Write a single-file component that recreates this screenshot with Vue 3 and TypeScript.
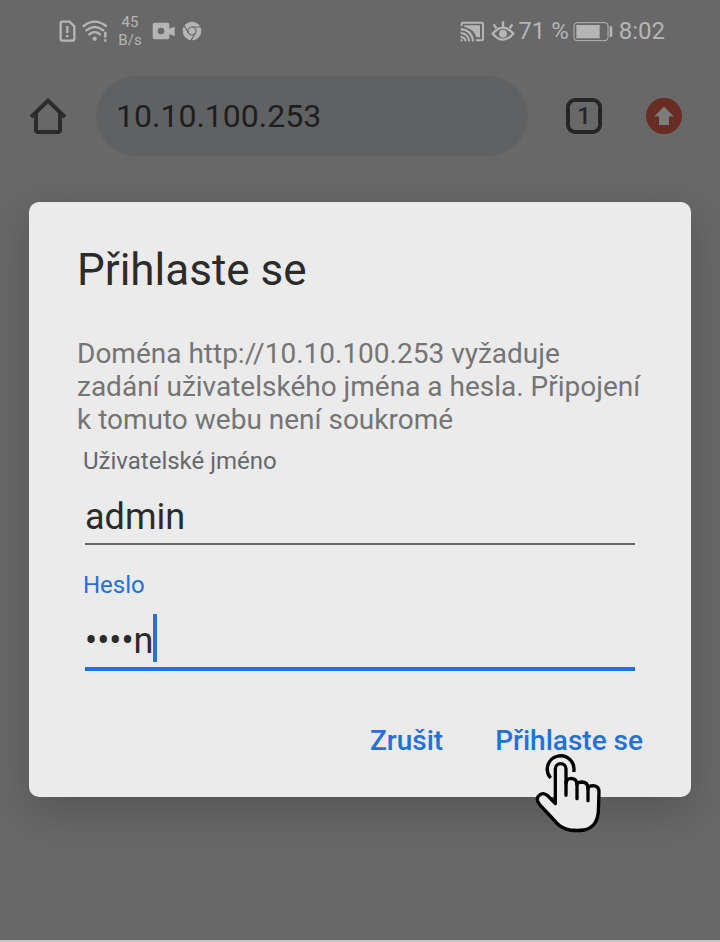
<script setup lang="ts">
import { ref } from 'vue'

const url = ref('10.10.100.253')
const username = ref('admin')
const password = ref('••••n')
</script>

<template>
  <div class="screen">
    <header class="status">
      <div class="status-left">
        <svg class="sim" viewBox="28 40 51 66" aria-hidden="true">
          <path d="M36 45H60L74 59V97Q74 102 69 102H38Q33 102 33 97V49Q33 45 36 45Z" fill="none" stroke="currentColor" stroke-width="7" stroke-linejoin="round" />
          <path d="M53 58V79M53 85V92" stroke="currentColor" stroke-width="7" />
        </svg>
        <svg class="wifi" viewBox="96 40 78 66" aria-hidden="true">
          <g fill="none" stroke="currentColor" stroke-width="7" stroke-linecap="round">
            <path d="M101 58Q134 32 168 58" />
            <path d="M109 71Q134 51 160 71" />
            <path d="M118 83Q134 70 150 83" />
          </g>
          <circle cx="134" cy="96" r="6.5" fill="currentColor" />
          <path d="M166 75V93M166 98V105" stroke="currentColor" stroke-width="7" />
        </svg>
        <div class="speed"><span>45</span><span>B/s</span></div>
        <svg class="camera" viewBox="306 48 72 60" aria-hidden="true">
          <path fill="currentColor" fill-rule="evenodd" d="M314 53H352Q358 53 358 59V71L374 65V94L358 87V97Q358 103 352 103H314Q308 103 308 97V59Q308 53 314 53ZM333 68A10 10 0 1 0 333 88A10 10 0 1 0 333 68Z" />
        </svg>
        <svg class="chrome" viewBox="396 48 60 60" aria-hidden="true">
          <circle cx="426" cy="78" r="28" fill="currentColor" />
          <g fill="none" stroke="#686868" stroke-width="3.5">
            <circle cx="426" cy="78" r="12" />
            <path d="M426 66H452M415.6 84L402 62M436.4 84L423 106" />
          </g>
        </svg>
      </div>
      <div class="status-right">
        <svg class="cast" viewBox="30 29 75 63" aria-hidden="true">
          <path d="M35 44V37Q35 34 38 34H96Q99 34 99 37V84Q99 87 96 87H78" fill="none" stroke="currentColor" stroke-width="6" />
          <path d="M43 42H90V78H79Q72 53 43 47Z" fill="currentColor" />
          <g fill="none" stroke="currentColor" stroke-width="6">
            <path d="M32 54Q66 56 69 90" />
            <path d="M32 65Q55 67 58 90" />
            <path d="M32 76Q45 78 47 90" />
          </g>
          <path d="M32 82Q38 83 39 90H32Z" fill="currentColor" />
        </svg>
        <svg class="eye" viewBox="123 29 72 63" aria-hidden="true">
          <path d="M128 67Q159 31 190 67Q159 103 128 67Z" fill="none" stroke="currentColor" stroke-width="7" />
          <circle cx="159" cy="67" r="12" fill="currentColor" />
          <path d="M159 30V48M131 39L139 51M187 39L179 51" stroke="currentColor" stroke-width="7" />
        </svg>
        <span class="percent">71 %</span>
        <svg class="battery" viewBox="368 30 120 63" aria-hidden="true">
          <rect x="371" y="35" width="102" height="54" rx="9" fill="none" stroke="currentColor" stroke-width="3" />
          <rect x="378" y="42" width="70" height="40" fill="currentColor" />
          <path d="M478 46H482Q486 46 486 50V74Q486 78 482 78H478Z" fill="currentColor" />
        </svg>
        <time class="clock">8:02</time>
      </div>
    </header>

    <nav class="toolbar">
      <button class="icon-button" type="button" aria-label="Domů">
        <svg viewBox="0 0 36 36" aria-hidden="true">
          <path d="M1 19L18 2.6L35 19" fill="none" stroke="#2b2b2c" stroke-width="4" />
          <path d="M6 15V32Q6 34 8 34H28Q30 34 30 32V15" fill="none" stroke="#2b2b2c" stroke-width="4" />
        </svg>
      </button>
      <input v-model="url" class="address" type="text" aria-label="Adresa" />
      <button class="icon-button tabs" type="button">1</button>
      <button class="icon-button update" type="button" aria-label="Aktualizovat">
        <svg viewBox="0 0 36 36" aria-hidden="true">
          <circle cx="18" cy="18" r="18" fill="#672d23" />
          <path d="M18 8.5L28 18.5H23V27H13V18.500H8Z" fill="#7c7c7c" />
        </svg>
      </button>
    </nav>

    <form class="dialog" role="dialog" aria-labelledby="dialog-title" @submit.prevent>
      <h1 id="dialog-title">Přihlaste se</h1>
      <p>Doména http://10.10.100.253 vyžaduje zadání uživatelského jména a hesla. Připojení k&nbsp;tomuto webu není soukromé</p>
      <div class="field">
        <label for="username">Uživatelské jméno</label>
        <div class="control">
          <input id="username" v-model="username" type="text" autocomplete="off" />
        </div>
      </div>
      <div class="field active">
        <label for="password">Heslo</label>
        <div class="control">
          <input id="password" v-model="password" type="text" autocomplete="off" />
          <span class="caret"></span>
        </div>
      </div>
      <div class="actions">
        <button type="button">Zrušit</button>
        <button class="submit" type="submit">
          Přihlaste se
          <svg class="hand" viewBox="102 96 204 246" aria-hidden="true">
            <path d="M152 174A40 40 0 1 1 221 156" fill="none" stroke="#000" stroke-width="10" />
            <path d="M166 251V147A16 16 0 0 1 198 147V190Q199 175 214 175Q231 176 231 194Q233 186 247 186Q264 187 264 206Q266 197 280 197Q297 198 297 216L295 276Q293 300 281 314Q269 327 252 330Q233 333 210 330Q188 326 173 312L119 254Q108 241 114 230Q127 213 144 228Z" fill="#ebebeb" stroke="#000" stroke-width="10" stroke-linejoin="round" />
            <path d="M198 185V226M231 192V236M264 203V242" fill="none" stroke="#000" stroke-width="10" stroke-linecap="round" />
          </svg>
        </button>
      </div>
    </form>
  </div>
</template>

<style>
body {
  margin: 0;
}
</style>

<style scoped>
.screen {
  box-sizing: border-box;
  min-height: 100vh;
  background: #686868;
  border-bottom: 2px solid #c9c6c6;
  font-family: Roboto, "Noto Sans", sans-serif;
}

button,
input {
  margin: 0;
  padding: 0;
  border: 0;
  outline: 0;
  background: none;
  font-family: inherit;
}

svg {
  display: block;
}

.status {
  display: flex;
  justify-content: space-between;
  align-items: center;
  height: 62px;
  padding: 0 55px 0 59px;
  color: #b5b5b5;
}

.status-left,
.status-right {
  display: flex;
  align-items: center;
}

.sim {
  width: 17px;
  height: 22px;
}

.wifi {
  width: 26px;
  height: 22px;
  margin-left: 6px;
}

.speed {
  display: flex;
  flex-direction: column;
  align-items: center;
  width: 24px;
  margin: 0 10px;
  font-size: 15px;
  line-height: 18px;
}

.camera {
  width: 24px;
  height: 20px;
}

.chrome {
  width: 20px;
  height: 20px;
  margin-left: 6px;
}

.cast {
  width: 25px;
  height: 21px;
}

.eye {
  width: 24px;
  height: 21px;
  margin: 0 3px 0 6px;
}

.percent,
.clock {
  font-size: 24px;
  line-height: 28px;
}

.battery {
  width: 40px;
  height: 21px;
  margin: 0 6px 0 4px;
}

.toolbar {
  display: flex;
  align-items: center;
  margin-top: 14px;
  padding: 0 38px 0 30px;
}

.icon-button {
  flex: none;
  width: 36px;
  height: 36px;
}

.address {
  box-sizing: border-box;
  flex: 1;
  min-width: 0;
  height: 80px;
  margin: 0 38px 0 30px;
  padding: 0 20px;
  border-radius: 40px;
  background: #606163;
  color: #1e1e1f;
  font-size: 32px;
}

.tabs {
  border: 4px solid #262628;
  border-radius: 9px;
  color: #262628;
  font-size: 24px;
  font-weight: 500;
  line-height: 28px;
}

.update {
  margin-left: 44px;
}

.dialog {
  margin: 46px 29px 0;
  padding: 42px 48px 38px;
  border-radius: 10px;
  background: #ebebeb;
  box-shadow: 0 14px 44px rgba(0, 0, 0, 0.19);
}

h1 {
  margin: 0;
  color: #2b2b2b;
  font-size: 44px;
  font-weight: 400;
  line-height: 52px;
}

p {
  margin: 41px 0 11px;
  color: #757575;
  font-size: 28px;
  line-height: 33px;
}

.field + .field {
  margin-top: 26px;
}

.field label {
  display: block;
  margin: 0 6px 15px;
  color: #66686c;
  font-size: 24px;
  line-height: 28px;
}

.control {
  display: flex;
  align-items: flex-end;
  height: 51px;
  margin: 0 8px;
  padding-bottom: 2px;
  border-bottom: 2px solid #666668;
}

.control input {
  width: 100%;
  height: 48px;
  color: #2b2b2b;
  font-size: 36px;
}

.active label {
  color: #2470db;
}

.active .control {
  border-bottom: 4px solid #2470db;
}

.active input {
  width: auto;
  field-sizing: content;
}

.caret {
  align-self: flex-start;
  width: 4px;
  height: 48px;
  background: #2470db;
}

.actions {
  display: flex;
  justify-content: flex-end;
  gap: 52px;
  margin-top: 52px;
}

.actions button {
  color: #2470db;
  font-size: 28px;
  font-weight: 500;
  line-height: 36px;
}

.submit {
  position: relative;
}

.hand {
  position: absolute;
  top: 29px;
  right: 41px;
  width: 68px;
  height: 82px;
}
</style>
